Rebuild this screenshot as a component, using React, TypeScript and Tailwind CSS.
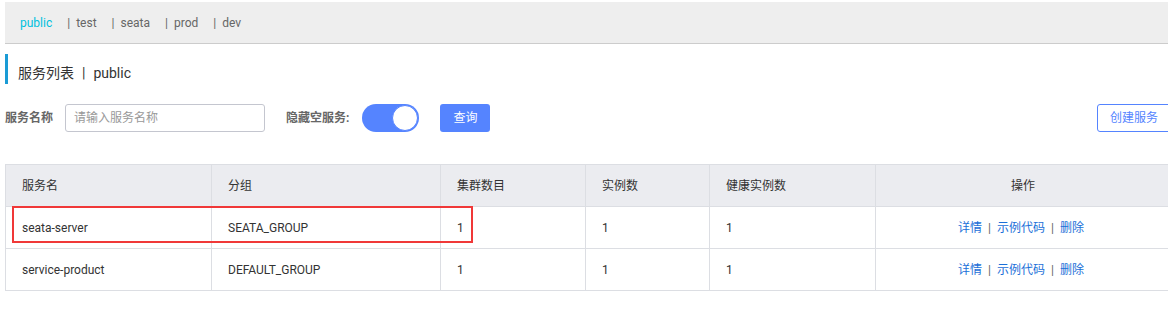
const namespaces = ["test", "seata", "prod", "dev"];

const columns = [
  { title: "服务名", width: "w-[206px]" },
  { title: "分组", width: "w-[229px]" },
  { title: "集群数目", width: "w-[145px]" },
  { title: "实例数", width: "w-[124px]" },
  { title: "健康实例数", width: "w-[166px]" },
];

const services = [
  { name: "seata-server", group: "SEATA_GROUP", clusters: 1, instances: 1, healthy: 1 },
  { name: "service-product", group: "DEFAULT_GROUP", clusters: 1, instances: 1, healthy: 1 },
];

const font = "font-['Roboto','Noto_Sans_CJK_SC',sans-serif]";

function Actions() {
  return (
    <div className="flex items-center justify-center pr-[4px] text-[12px] text-[#1a6fd8]">
      <span>详情</span>
      <span className="mx-[6px] text-[#666]">|</span>
      <span>示例代码</span>
      <span className="mx-[6px] text-[#666]">|</span>
      <span>删除</span>
    </div>
  );
}

export default function App() {
  return (
    <div className={`h-[318px] w-[1168px] overflow-hidden bg-white pl-[5px] ${font}`}>
      {/* namespace tabs */}
      <div className="mt-[2px] flex h-[42px] items-center gap-[15px] border-b border-[#cccccc] bg-[#eeeeee] pl-[15px] text-[12px] text-[#666]">
        <span className="text-[#00c1de]">public</span>
        {namespaces.map((ns) => (
          <span key={ns}>
            <span className="mr-[6px]">|</span>
            {ns}
          </span>
        ))}
      </div>

      <div className="mt-[10px] flex h-[30px] items-center border-l-[3px] border-[#1a9bd5] pl-[10px] pt-[8px] text-[14px] text-[#333]">
        服务列表<span className="mx-[8px]">|</span>public
      </div>

      {/* search bar */}
      <div className="mt-[20px] flex h-[28px] w-[1166px] items-center text-[12px]">
        <span className="font-bold text-[#666]">服务名称</span>
        <div className="ml-[12px] flex h-[28px] w-[200px] items-center rounded-[3px] border border-[#c4c6cf] px-[8px] text-[#999]">
          请输入服务名称
        </div>
        <span className="ml-[21px] font-bold text-[#666]">隐藏空服务:</span>
        <div className="ml-[13px] flex h-[28px] w-[57px] items-center justify-end rounded-full bg-[#5584ff] p-[1px]">
          <div className="h-[26px] w-[26px] rounded-full border border-[#5584ff] bg-white" />
        </div>
        <button className="ml-[21px] h-[28px] w-[50px] rounded-[3px] bg-[#5584ff] text-white">查询</button>
        <button className="ml-auto h-[28px] rounded-[3px] border border-[#5584ff] bg-white px-[12px] text-[#5584ff]">
          创建服务
        </button>
      </div>

      {/* service table */}
      <div className="relative mt-[32px] w-[1166px] border border-[#dcdee3] text-[12px] text-[#333]">
        <div className="flex h-[41px] items-center bg-[#ebecf0]">
          {columns.map((c) => (
            <div key={c.title} className={`${c.width} flex h-full items-center border-r border-[#dcdee3] pl-[16px]`}>
              {c.title}
            </div>
          ))}
          <div className="flex h-full flex-1 items-center justify-center">操作</div>
        </div>
        {services.map((s) => (
          <div key={s.name} className="flex h-[42px] items-center border-t border-[#dcdee3]">
            <div className="flex h-full w-[206px] items-center border-r border-[#dcdee3] pl-[16px]">{s.name}</div>
            <div className="flex h-full w-[229px] items-center border-r border-[#dcdee3] pl-[16px]">{s.group}</div>
            <div className="flex h-full w-[145px] items-center border-r border-[#dcdee3] pl-[16px]">{s.clusters}</div>
            <div className="flex h-full w-[124px] items-center border-r border-[#dcdee3] pl-[16px]">{s.instances}</div>
            <div className="flex h-full w-[166px] items-center border-r border-[#dcdee3] pl-[16px]">{s.healthy}</div>
            <div className="flex-1">
              <Actions />
            </div>
          </div>
        ))}
        {/* red highlight box */}
        <div className="absolute left-[6px] top-[41px] h-[37px] w-[461px] border-2 border-[#f03838]" />
      </div>
    </div>
  );
}
